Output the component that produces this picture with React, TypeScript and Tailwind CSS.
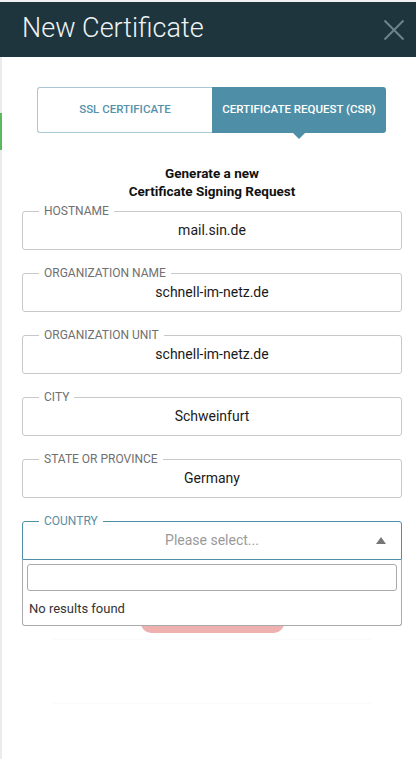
import React from "react";

function Field({ label, value }: { label: string; value: string }) {
  return (
    <fieldset className="border border-[#c8c8c8] rounded-[3px] px-0 pb-0">
      <legend className="ml-[16px] px-[5px] text-[12px] leading-[14px] text-[#707070] uppercase">{label}</legend>
      <div className="h-[31px] leading-[25px] text-center text-[14px] text-[#1a1a1a]">{value}</div>
    </fieldset>
  );
}

export default function App() {
  return (
    <div className="w-[416px] h-[759px] bg-white overflow-hidden flex flex-col" style={{ fontFamily: "Roboto, 'Noto Sans', sans-serif" }}>
      <div className="h-[2px] bg-[#eef0f1]" />
      <div className="h-[55px] bg-[#1f353e] flex items-center justify-between pl-[22px] pr-[10px]">
        <div className="text-[27px] font-light text-[#eef3f5] leading-none -mt-[2px]">New Certificate</div>
        <svg width="22" height="22" viewBox="0 0 22 22" className="mr-[1px]">
          <path d="M1.5 1.5 L20.5 20.5 M20.5 1.5 L1.5 20.5" stroke="#6d848c" strokeWidth="2" fill="none" />
        </svg>
      </div>
      <div className="flex flex-1">
        <div className="w-[2px] bg-[#e8ecee] flex flex-col">
          <div className="h-[56px]" />
          <div className="h-[37px] w-[2px] bg-[#5cb85c]" />
        </div>
        <div className="flex-1 flex flex-col pl-[20px] pr-[14px]">
          <div className="mt-[30px] ml-[15px] mr-[16px] flex h-[46px] relative">
            <div className="flex-1 border border-[#a9c7d4] border-r-0 rounded-l-[3px] flex items-center justify-center text-[11.5px] font-medium text-[#5592ab]">SSL CERTIFICATE</div>
            <div className="flex-1 bg-[#4e8fa7] rounded-r-[3px] flex items-center justify-center text-[11.5px] font-medium text-white relative">
              CERTIFICATE REQUEST (CSR)
              <div className="absolute left-1/2 -translate-x-1/2 top-full w-0 h-0 border-l-[6px] border-r-[6px] border-t-[6px] border-l-transparent border-r-transparent border-t-[#4e8fa7]" />
            </div>
          </div>
          <div className="mt-[31px] text-center text-[13.5px] font-bold leading-[18px] text-[#111]">
            Generate a new<br />Certificate Signing Request
          </div>
          <div className="mt-[4px] flex flex-col gap-[16px]">
            <Field label="Hostname" value="mail.sin.de" />
            <Field label="Organization Name" value="schnell-im-netz.de" />
            <Field label="Organization Unit" value="schnell-im-netz.de" />
            <Field label="City" value="Schweinfurt" />
            <Field label="State or Province" value="Germany" />
            <div className="relative">
              <fieldset className="border border-[#4e8fa7] rounded-t-[3px] px-0 pb-0">
                <legend className="ml-[16px] px-[5px] text-[12px] leading-[14px] text-[#5a8ea4] uppercase">Country</legend>
                <div className="h-[31px] leading-[25px] text-center text-[14px] text-[#9a9a9a] relative">
                  Please select...
                  <svg width="10" height="7" viewBox="0 0 10 7" className="absolute right-[15px] top-[9px]">
                    <path d="M0 7 L5 0 L10 7 Z" fill="#777" />
                  </svg>
                </div>
              </fieldset>
              <div className="absolute left-0 right-0 top-full z-10 bg-white border border-t-0 border-[#aaaaaa] rounded-b-[3px] px-[4px] pt-[4px] pb-[8px]">
                <div className="h-[27px] border border-[#aaaaaa] rounded-[3px] bg-white" />
                <div className="mt-[10px] pl-[2px] text-[13px] leading-[16px] text-[#333]">No results found</div>
              </div>
            </div>
          </div>
          <div className="mt-[41px] mx-auto w-[143px] h-[32px] rounded-[10px] bg-[#efb0b0]" />
          <div className="mt-[6px] mx-[31px] h-[1px] bg-[#fafafa]" />
          <div className="mt-[63px] mx-[31px] h-[1px] bg-[#fafafa]" />
        </div>
      </div>
    </div>
  );
}
